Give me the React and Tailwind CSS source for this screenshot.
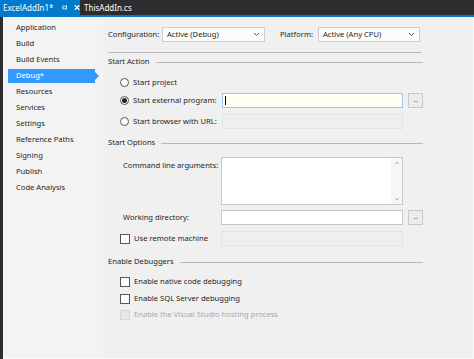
import React from "react";

const font = { fontFamily: '"Noto Sans", "Open Sans", sans-serif' };

function Radio({ checked }) {
  return (
    <span className="w-[9px] h-[9px] rounded-full border border-[#555] bg-white flex items-center justify-center shrink-0">
      {checked && <span className="w-[5px] h-[5px] rounded-full bg-[#222]" />}
    </span>
  );
}

function Check({ disabled }) {
  return (
    <span
      className={
        "w-[10px] h-[10px] border shrink-0 " +
        (disabled ? "border-[#d8d8d8] bg-[#e8e8e8]" : "border-[#555] bg-white")
      }
    />
  );
}

function Header({ title }) {
  return (
    <div className="flex items-center h-[12px] pr-[50px]">
      <span className="text-[#1e1e1e] whitespace-nowrap">{title}</span>
      <span className="flex-1 h-px bg-[#b8b8b8] ml-[6px]" />
    </div>
  );
}

function Select({ value, w }) {
  return (
    <div className={"h-[15px] border border-[#cccedb] bg-[#fcfcfc] flex items-center pl-[4px] pr-[4px] " + w}>
      <span className="flex-1 text-[#1e1e1e] whitespace-nowrap">{value}</span>
      <svg width="7" height="5" viewBox="0 0 7 5">
        <path d="M1 1 L3.5 3.5 L6 1" stroke="#555" strokeWidth="1" fill="none" />
      </svg>
    </div>
  );
}

function Browse() {
  return (
    <div className="w-[15px] h-[15px] border border-[#c8c8c8] bg-[#ececec] flex items-end justify-center pb-[4px] ml-[5px]">
      <span className="text-[6px] leading-none text-[#333] tracking-[-0.5px]">...</span>
    </div>
  );
}

const navItems = [
  "Application",
  "Build",
  "Build Events",
  "Debug*",
  "Resources",
  "Services",
  "Settings",
  "Reference Paths",
  "Signing",
  "Publish",
  "Code Analysis",
];

export default function App() {
  return (
    <div className="w-[474px] h-[359px] overflow-hidden bg-[#f0f0f0] text-[7.6px] leading-none flex flex-col whitespace-nowrap" style={font}>
      {/* Tab bar */}
      <div className="h-[15px] bg-[#2d2d30] flex items-stretch shrink-0 text-[8px]">
        <div className="w-[80px] bg-[#007acc] flex items-center pl-[3px] text-white">
          <span>ExcelAddIn1*</span>
          <svg className="ml-[8px]" width="7" height="7" viewBox="0 0 7 7">
            <rect x="1" y="2" width="4" height="3" fill="none" stroke="#cfe6f7" strokeWidth="1" />
            <path d="M0 3.5 H1 M5 1 V6" stroke="#cfe6f7" strokeWidth="1" />
          </svg>
          <svg className="ml-[6px]" width="7" height="7" viewBox="0 0 7 7">
            <path d="M1 1 L6 6 M6 1 L1 6" stroke="white" strokeWidth="1.3" />
          </svg>
        </div>
        <div className="flex items-center pl-[4px] text-white">ThisAddIn.cs</div>
      </div>
      <div className="h-[2px] bg-[#007acc] shrink-0" />

      <div className="flex flex-1 min-h-0">
        <div className="w-[3px] bg-[#2d2d30]" />
        {/* Nav */}
        <div className="w-[100px] pt-[3px] bg-[#f3f3f3] border-b border-[#fafafa]">
          {navItems.map((n) => {
            const sel = n === "Debug*";
            return (
              <div key={n} className="h-[16px] flex items-center relative">
                {sel ? (
                  <div className="ml-[5px] w-[87px] h-[14px] bg-[#3399ff] text-white flex items-center pl-[8px] relative">
                    Debug*
                    <span className="absolute right-[-4px] top-[3px] w-0 h-0 border-t-[4px] border-b-[4px] border-l-[4px] border-t-transparent border-b-transparent border-l-[#3399ff]" />
                  </div>
                ) : (
                  <span className="pl-[13px] text-[#1e1e1e]">{n}</span>
                )}
              </div>
            );
          })}
        </div>

        {/* Main */}
        <div className="flex-1 pl-[5px] pt-[10px] text-[#1e1e1e] border-b border-r border-[#fafafa]">
          <div className="flex items-center">
            <span className="w-[54px]">Configuration:</span>
            <Select value="Active (Debug)" w="w-[103px]" />
            <span className="ml-[15px] w-[38px]">Platform:</span>
            <Select value="Active (Any CPU)" w="w-[102px]" />
          </div>
          <div className="h-px bg-[#b8b8b8] mt-[10px] w-[313px]" />

          <div className="mt-[3px]">
            <Header title="Start Action" />
          </div>

          <div className="pl-[12px]">
            <div className="flex items-center h-[15px] mt-[7px]">
              <Radio />
              <span className="ml-[4px]">Start project</span>
            </div>
            <div className="flex items-center h-[15px] mt-[3px]">
              <Radio checked />
              <span className="ml-[4px] w-[89px]">Start external program:</span>
              <div className="w-[181px] h-[15px] border border-[#99c9ef] bg-[#fffff4] flex items-center pl-[2px]">
                <span className="w-px h-[9px] bg-black" />
              </div>
              <Browse />
            </div>
            <div className="flex items-center h-[15px] mt-[6px]">
              <Radio />
              <span className="ml-[4px] w-[89px]">Start browser with URL:</span>
              <div className="w-[181px] h-[15px] border border-[#e3e3e3] bg-[#efefef]" />
            </div>
          </div>

          <div className="mt-[8px]">
            <Header title="Start Options" />
          </div>

          <div className="pl-[15px]">
            <div className="flex items-start mt-[8px]">
              <span className="w-[98px] mt-[5px]">Command line arguments:</span>
              <div className="w-[182px] h-[48px] border border-[#c8c8c8] bg-white flex justify-end">
                <div className="w-[11px] bg-[#f6f6f6] flex flex-col items-center justify-between py-[3px]">
                  <svg width="6" height="4" viewBox="0 0 6 4">
                    <path d="M1 3 L3 1 L5 3" stroke="#b0b0b0" fill="none" />
                  </svg>
                  <svg width="6" height="4" viewBox="0 0 6 4">
                    <path d="M1 1 L3 3 L5 1" stroke="#b0b0b0" fill="none" />
                  </svg>
                </div>
              </div>
            </div>
            <div className="flex items-center h-[15px] mt-[5px]">
              <span className="w-[98px]">Working directory:</span>
              <div className="w-[182px] h-[15px] border border-[#c8c8c8] bg-white" />
              <Browse />
            </div>
          </div>
          <div className="pl-[12px] flex items-center h-[15px] mt-[6px]">
            <Check />
            <span className="ml-[4px] w-[87px]">Use remote machine</span>
            <div className="w-[182px] h-[15px] border border-[#e3e3e3] bg-[#efefef]" />
          </div>

          <div className="mt-[10px]">
            <Header title="Enable Debuggers" />
          </div>

          <div className="pl-[12px]">
            <div className="flex items-center h-[12px] mt-[8px]">
              <Check />
              <span className="ml-[4px]">Enable native code debugging</span>
            </div>
            <div className="flex items-center h-[12px] mt-[5px]">
              <Check />
              <span className="ml-[4px]">Enable SQL Server debugging</span>
            </div>
            <div className="flex items-center h-[12px] mt-[4px]">
              <Check disabled />
              <span className="ml-[4px] text-[#a8a8a8]">Enable the Visual Studio hosting process</span>
            </div>
          </div>
        </div>
      </div>
    </div>
  );
}
